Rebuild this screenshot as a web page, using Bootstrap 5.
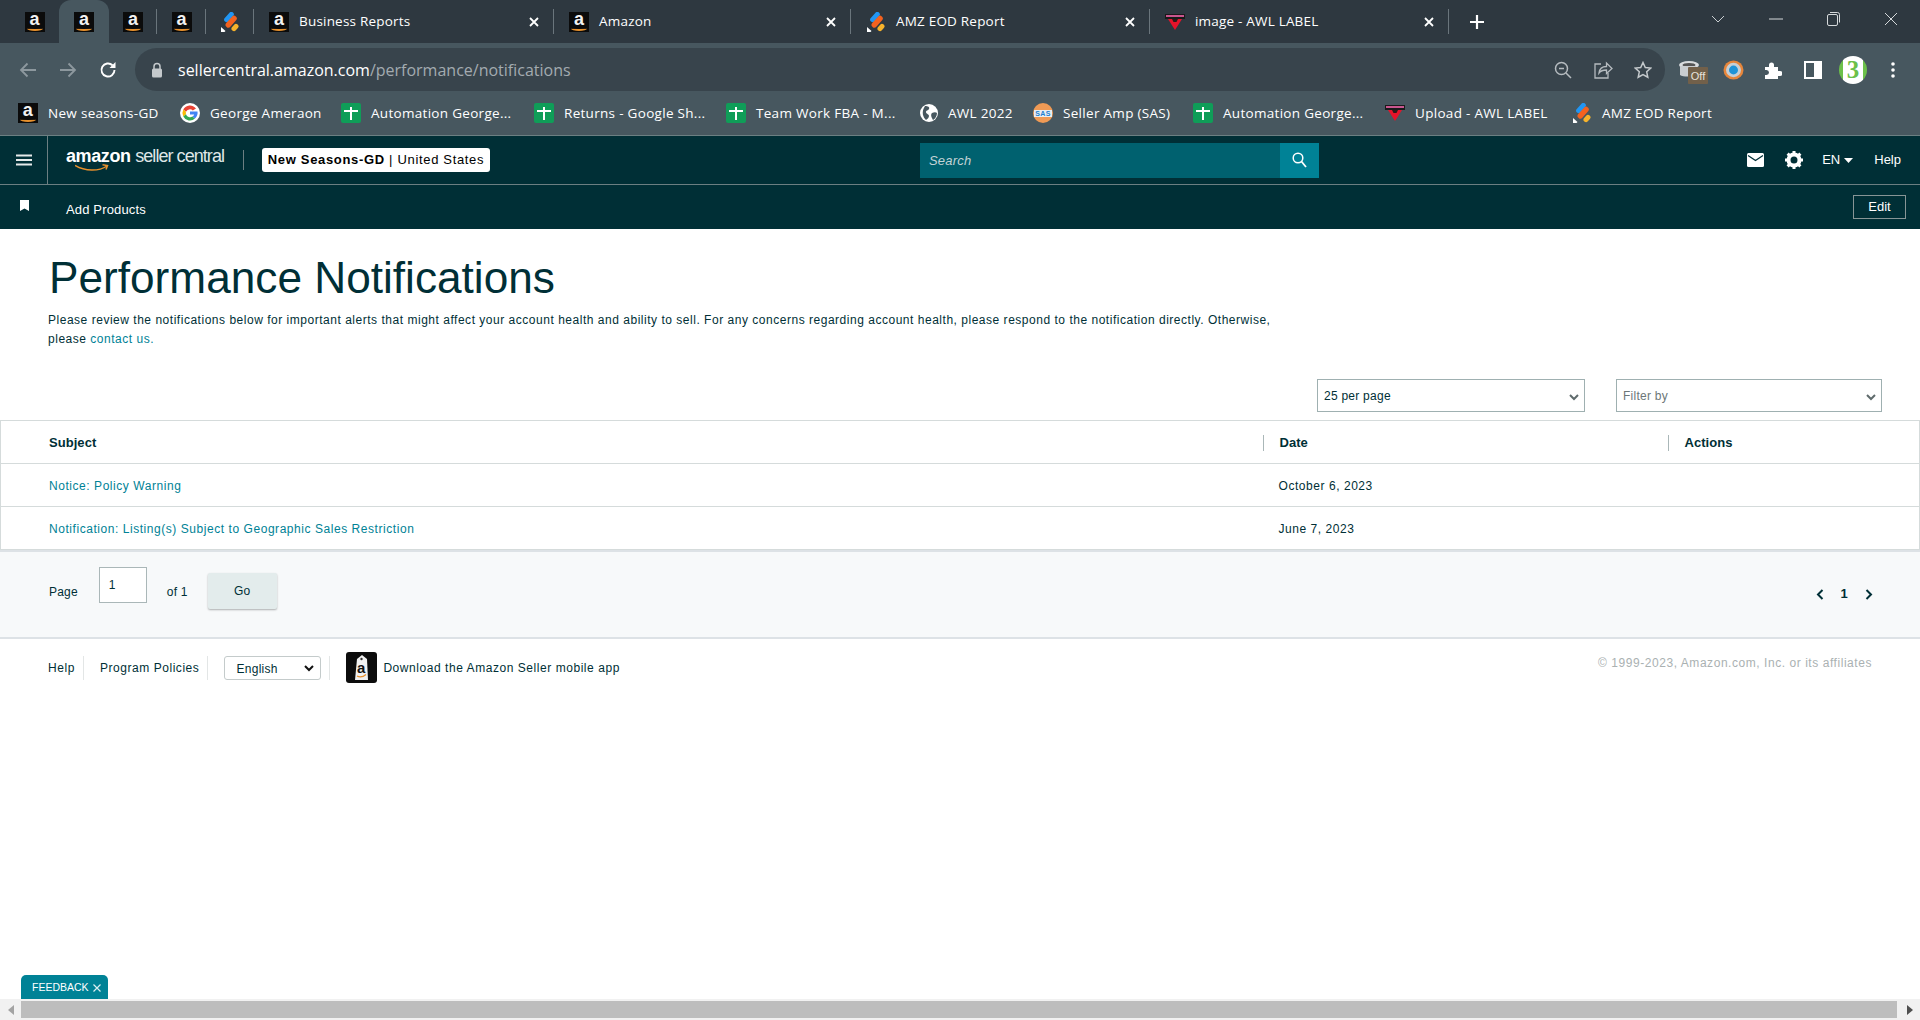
<!DOCTYPE html>
<html lang="en">
<head>
<meta charset="UTF-8">
<title>Performance Notifications</title>
<link href="https://cdn.jsdelivr.net/npm/bootstrap@5.3.0/dist/css/bootstrap.min.css" rel="stylesheet">
<style>
    html, body { height: 100%; overflow: hidden; }
    body { font-family: "Liberation Sans", Arial, sans-serif; font-size: 12px; color: #002f36; background: #fff; }
    .shell { height: 1020px; }

    /* browser chrome */
    .chrome-text { font-family: "Open Sans", "Noto Sans", sans-serif; color: #fff; white-space: nowrap; }
    .fav-a { width: 20px; height: 20px; flex: none; background: #0b0b0b; color: #f2f2f2; font: 700 18px/15px "Liberation Sans", sans-serif; text-align: center; position: relative; }
    .fav-a::after { content: ""; position: absolute; left: 2px; right: 2px; bottom: 1px; height: 5px; border-bottom: 2px solid #e8912d; border-radius: 50%; }
    .tab-strip { height: 43px; background: #2e3840; padding-left: 10px; display: grid; grid-template-columns: 49px 50px 48px 49px 48px 300px 297px 299px 299px 56px 1fr; }
    .tab-cell { display: flex; align-items: center; position: relative; font-size: 13.5px; letter-spacing: .2px; }
    .tab-cell.pin { justify-content: center; }
    .tab-cell.wide { padding-left: 15px; }
    .tab-cell.sep::after { content: ""; position: absolute; right: 0; top: 9px; height: 25px; width: 1px; background: #6a757c; }
    .tab-active { background: #47575f; border-radius: 12px 12px 0 0; }
    .tab-label { margin-left: 10px; flex: 1; }
    .tab-x { margin-right: 14px; }
    .win-btns { display: flex; justify-content: flex-end; padding-top: 8px; align-items: flex-start; }
    .win-btns span { width: 57.5px; display: flex; justify-content: center; height: 22px; align-items: center; }
    .win-btns span:last-child { margin-right: 0; width: 58px; }

    .tool-row { height: 48px; background: #47575f; padding-top: 5px; }
    .tool-btn { width: 40px; height: 43px; display: flex; align-items: center; justify-content: center; flex: none; }
    .tool-gap { width: 8px; flex: none; }
    .omni { width: 1530px; height: 43px; background: #38444c; border-radius: 22px; margin-left: 7px; padding-left: 15px; padding-right: 2px; flex: none; }
    .omni-url { margin-left: 14px; font-size: 16px; color: #fff; }
    .omni-url span { color: #a3abb0; }
    .avatar-three { width: 28px; height: 28px; border-radius: 50%; background: linear-gradient(90deg, #6cc04a 0 4px, #fff 4px 24px, #6cc04a 24px); color: #6cc04a; font: 700 25px/28px "Liberation Serif", serif; text-align: center; }
    .bm-row { height: 44px; background: #47575f; padding-left: 18px; display: grid; grid-template-columns: 162px 161px 193px 192px 194px 113px 160px 192px 187px 1fr; align-items: center; }
    .bm-item { display: flex; align-items: center; gap: 10px; font-size: 13.5px; letter-spacing: .3px; }

    /* seller central bars */
    .sc-top { height: 50px; background: #002f36; border-top: 1px solid #6c7f82; border-bottom: 1px solid #6c7f82; }
    .sc-burger { width: 48px; height: 48px; border-right: 1px solid #6c7f82; display: flex; align-items: center; justify-content: center; }
    .sc-logo { margin-left: 18px; width: 158px; height: 34px; padding-top: 3px; flex: none; }
    .sc-logo-text { display: flex; justify-content: space-between; font-size: 18px; line-height: 21px; white-space: nowrap; color: #dfe6e7; letter-spacing: -.95px; }
    .sc-logo-text b { color: #fff; letter-spacing: -.4px; }
    .sc-smile { display: block; margin: -3px 0 0 9px; }
    .sc-vr { width: 1px; height: 20px; background: #6c7f82; margin: 0 18px 0 19px; }
    .sc-account { width: 228px; height: 24px; background: #fff; border-radius: 3px; color: #000; font-size: 13px; display: flex; align-items: center; justify-content: center; white-space: nowrap; letter-spacing: .67px; }
    .sc-search { margin-left: 430px; width: 399px; height: 35px; display: flex; }
    .sc-search-in { width: 360px; background: #00616f; color: #c3d3d6; font-style: italic; font-size: 13px; line-height: 35px; padding-left: 9px; letter-spacing: .2px; }
    .sc-search-btn { width: 39px; background: #008296; display: flex; align-items: center; justify-content: center; }
    .sc-right { margin-left: auto; padding-right: 19px; color: #fff; font-size: 13px; }
    .sc-right > * { flex: none; }
    .sc-gear { margin-left: 21px; }
    .sc-lang { margin-left: 19px; }
    .sc-help { margin-left: 21px; }
    .sc-sub { height: 44px; background: #002f36; color: #fff; }
    .sc-sub-flag { width: 48px; display: flex; justify-content: center; padding-bottom: 3px; }
    .sc-sub-link { margin-left: 18px; font-size: 13px; letter-spacing: .15px; padding-top: 6px; }
    .sc-edit { margin-left: auto; margin-right: 14px; width: 53px; height: 24px; border: 1px solid #879596; color: #fff; font-size: 13px; display: flex; align-items: center; justify-content: center; }

    /* page */
    .page-head { padding: 25px 0 0 49px; }
    .page-title { font-size: 44.2px; line-height: 48px; font-weight: 400; color: #002f36; margin: 0 0 9px; }
    .page-note { font-size: 12px; line-height: 18.5px; letter-spacing: .52px; margin: 0 0 0 -1px; white-space: nowrap; }
    .page-note a { color: #008296; text-decoration: none; }
    .filter-row { display: flex; justify-content: flex-end; gap: 31px; padding-right: 38px; margin-top: 31px; }
    .fake-select { height: 33px; background: #fff; border: 1px solid #9fb0b1; display: flex; align-items: center; justify-content: space-between; padding: 0 5px 0 6px; font-size: 12px; letter-spacing: .25px; }
    .fake-select svg { margin-top: 4px; }
    .fs-a { width: 268px; }
    .fs-b { width: 266px; color: #6c7778; }

    .notice-table { margin: 8px 0 0; table-layout: fixed; width: 1920px; border-collapse: collapse; }
    .notice-table.table > * > * > * { padding: 2px 0 0 48px; height: 43px; border: 0; vertical-align: middle; font-size: 12px; letter-spacing: .55px; color: #002f36; background: transparent; box-shadow: none; }
    .notice-table.table > * > * { border-top: 1px solid #d5dbdb; border-bottom: 1px solid #d5dbdb; }
    .notice-table.table > * > * > *:first-child { border-left: 1px solid #d5dbdb; }
    .notice-table.table > * > * > *:last-child { border-right: 1px solid #d5dbdb; }
    .notice-table.table > * > * > .col-pad { padding-left: 16px; }
    .notice-table.table > thead th { font-size: 13px; font-weight: 700; letter-spacing: .05px; }
    .notice-table.table > thead th.col-pad { padding-left: 0; }
    .col-subject { width: 1262px; }
    .col-date { width: 405px; }
    .head-sep { display: block; border-left: 1px solid #aab7b8; padding-left: 16px; line-height: 16px; }
    .notice-table.table > * > * > .notice-link { color: #008296; }

    .pager { height: 89px; background: #f7f9fa; border-top: 2px solid #dde2e6; border-bottom: 2px solid #dde2e6; padding-left: 49px; padding-right: 47px; font-size: 12px; letter-spacing: .2px; }
    .pager-label { margin-top: 31px; }
    .pager-input { width: 48px; height: 36px; background: #fff; border: 1px solid #aab7b8; margin: 15px 0 0 21px; padding: 8px 0 0 9px; }
    .pager-of { margin: 31px 0 0 20px; }
    .pager-go { width: 69px; height: 36px; background: #e3ecec; border-radius: 2px; margin: 21px 0 0 20px; display: flex; align-items: center; justify-content: center; box-shadow: 0 1px 2px rgba(0,0,0,.3); font-size: 12px; }
    .pager-nums { margin-left: auto; margin-top: 35px; gap: 17px; font-size: 13px; font-weight: 700; height: 14px; }

    .foot-row { padding: 13px 48px 0 48px; font-size: 12px; letter-spacing: .55px; }
    .foot-sep { width: 1px; height: 24px; background: #e3e6e6; flex: none; }
    .foot-select { width: 97px; height: 24px; border: 1px solid #c4cbcb; border-radius: 3px; display: flex; align-items: center; justify-content: space-between; padding: 2px 6px 0 11px; font-size: 12px; flex: none; letter-spacing: .3px; }
    .foot-app { margin-left: 6px; }
    .foot-copy { margin-left: auto; color: #aab1b2; margin-top: -10px; }

    .feedback-tab { width: 87px; height: 24px; margin-left: 21px; background: #008296; border-radius: 5px 5px 0 0; color: #fff; font-size: 10.5px; display: flex; align-items: center; padding: 1px 0 0 11px; gap: 4px; }
    .fake-scroll { height: 21px; background: #f1f1f1; display: flex; align-items: center; justify-content: space-between; }
    .fake-thumb { flex: 1; height: 17px; background: #bdbdbd; margin: 0 2px 0 0; }
    .scroll-end { width: 21px; display: flex; justify-content: center; flex: none; }
</style>
</head>
<body>

<svg width="0" height="0" class="d-block">
    <symbol id="fav-amz" viewBox="0 0 20 20">
        <rect x="6.500" y="-1" width="5" height="12" rx="2.500" transform="rotate(42 9 5)" fill="#2196f3"/>
        <rect x="8.500" y="2.500" width="5.500" height="14" rx="2.700" transform="rotate(42 11 9.500)" fill="#f4621f"/>
        <rect x="12.500" y="11.500" width="5" height="8" rx="2.500" transform="rotate(42 15 15.500)" fill="#f7b32b"/>
        <path d="M1 15l4.500 4-1 1H1z" fill="#fff"/>
    </symbol>
    <symbol id="fav-sheet" viewBox="0 0 20 20">
        <rect width="20" height="20" rx="2" fill="#0f9d58"/>
        <path d="M10 4v13M3 8h14" stroke="#fff" stroke-width="2"/>
    </symbol>
    <symbol id="fav-awl" viewBox="0 0 20 16">
        <rect x="0" y="0" width="20" height="5" fill="#1a1a1a"/>
        <rect x="1" y="1" width="18" height="2" fill="#c9568f"/>
        <path d="M3 5h14l-7 11z" fill="#e5132a"/>
        <path d="M7 5h6l-1.500 3h-3z" fill="#2a1a1a"/>
    </symbol>
    <symbol id="ic-x" viewBox="0 0 12 12">
        <path d="M2 2l8 8M10 2l-8 8" stroke="#fff" stroke-width="1.800" fill="none"/>
    </symbol>
</svg>

<div class="shell d-flex flex-column">

    <!-- tabs -->
    <div class="tab-strip chrome-text">
        <div class="tab-cell pin"><span class="fav-a">a</span></div>
        <div class="tab-cell pin tab-active"><span class="fav-a">a</span></div>
        <div class="tab-cell pin sep"><span class="fav-a">a</span></div>
        <div class="tab-cell pin sep"><span class="fav-a">a</span></div>
        <div class="tab-cell pin sep"><svg width="20" height="20"><use href="#fav-amz"/></svg></div>
        <div class="tab-cell wide sep"><span class="fav-a">a</span><span class="tab-label">Business Reports</span><svg class="tab-x" width="12" height="12"><use href="#ic-x"/></svg></div>
        <div class="tab-cell wide sep"><span class="fav-a">a</span><span class="tab-label">Amazon</span><svg class="tab-x" width="12" height="12"><use href="#ic-x"/></svg></div>
        <div class="tab-cell wide sep"><svg width="20" height="20"><use href="#fav-amz"/></svg><span class="tab-label">AMZ EOD Report</span><svg class="tab-x" width="12" height="12"><use href="#ic-x"/></svg></div>
        <div class="tab-cell wide sep"><svg width="20" height="16"><use href="#fav-awl"/></svg><span class="tab-label">image - AWL LABEL</span><svg class="tab-x" width="12" height="12"><use href="#ic-x"/></svg></div>
        <div class="tab-cell justify-content-center"><svg width="16" height="16" viewBox="0 0 16 16"><path d="M8 1v14M1 8h14" stroke="#fff" stroke-width="2.200"/></svg></div>
        <div class="win-btns">
            <span><svg width="14" height="8" viewBox="0 0 14 8"><path d="M1 1l6 6 6-6" fill="none" stroke="#c9ced1" stroke-width="1"/></svg></span>
            <span><svg width="14" height="2" viewBox="0 0 14 2"><path d="M0 1h14" stroke="#d5d9db" stroke-width="1"/></svg></span>
            <span><svg width="13" height="14" viewBox="0 0 13 14"><rect x=".5" y="2.500" width="10" height="11" rx="1.500" fill="none" stroke="#d5d9db"/><path d="M3 .5h7.500a2 2 0 012 2v8" fill="none" stroke="#d5d9db"/></svg></span>
            <span><svg width="14" height="14" viewBox="0 0 14 14"><path d="M1 1l12 12M13 1L1 13" stroke="#d5d9db" stroke-width="1"/></svg></span>
        </div>
    </div>

    <!-- toolbar -->
    <div class="tool-row d-flex">
        <div class="tool-gap"></div>
        <div class="tool-btn"><svg width="18" height="16" viewBox="0 0 18 16"><path d="M17 8H2M8.500 1.500L2 8l6.500 6.500" fill="none" stroke="#8d989e" stroke-width="1.800"/></svg></div>
        <div class="tool-btn"><svg width="18" height="16" viewBox="0 0 18 16"><path d="M1 8h15M9.500 1.500L16 8l-6.500 6.500" fill="none" stroke="#8d989e" stroke-width="1.800"/></svg></div>
        <div class="tool-btn"><svg width="18" height="18" viewBox="0 0 18 18"><path d="M15.500 9a6.500 6.500 0 11-2-4.700" fill="none" stroke="#fff" stroke-width="1.900"/><path d="M16.500 1v6h-6z" fill="#fff"/></svg></div>
        <div class="omni d-flex align-items-center chrome-text">
            <svg width="14" height="16" viewBox="0 0 14 16"><path d="M4 7V4.500a3 3 0 016 0V7" fill="none" stroke="#c4c9cc" stroke-width="1.500"/><rect x="2" y="6.500" width="10" height="9" rx="1.500" fill="#c4c9cc"/></svg>
            <div class="omni-url">sellercentral.amazon.com<span>/performance/notifications</span></div>
            <div class="d-flex ms-auto">
                <div class="tool-btn"><svg width="18" height="18" viewBox="0 0 18 18"><circle cx="7.500" cy="7.500" r="6" fill="none" stroke="#b5bbbf" stroke-width="1.500"/><path d="M12 12l5 5M5 7.500h5" stroke="#b5bbbf" stroke-width="1.500"/></svg></div>
                <div class="tool-btn"><svg width="19" height="18" viewBox="0 0 19 18"><path d="M7 3H1v14h13v-5" fill="none" stroke="#b5bbbf" stroke-width="1.300"/><path d="M5 12c.5-4 3.500-6.500 7.500-6.500V2L18 7.500l-5.500 5V9C9 9 6.500 10 5 12z" fill="none" stroke="#b5bbbf" stroke-width="1.300"/></svg></div>
                <div class="tool-btn"><svg width="18" height="18" viewBox="0 0 18 18"><path d="M9 1.500l2.300 5 5.400.6-4 3.700 1.100 5.400L9 13.500l-4.800 2.700 1.100-5.400-4-3.700 5.400-.6z" fill="none" stroke="#c4c9cc" stroke-width="1.500"/></svg></div>
            </div>
        </div>
        <div class="tool-gap"></div>
        <div class="tool-btn"><svg width="30" height="28" viewBox="0 0 30 28"><ellipse cx="11" cy="9" rx="10" ry="4" fill="#d9dcde"/><ellipse cx="11" cy="9" rx="6.500" ry="2" fill="#555"/><path d="M2 10v9c3 2 12 2 16 0v-9" fill="#c9cdd0"/><rect x="10" y="11" width="20" height="17" rx="1" fill="#72604a"/><text x="20" y="24" text-anchor="middle" font-family="Liberation Sans" font-size="11" fill="#e6e2dc">Off</text></svg></div>
        <div class="tool-btn"><svg width="21" height="20" viewBox="0 0 21 25" preserveAspectRatio="none"><ellipse cx="10.500" cy="12.500" rx="10" ry="12" fill="#e7863b"/><ellipse cx="10.500" cy="12.500" rx="7.500" ry="9" fill="#c7cfd4"/><ellipse cx="10.500" cy="12.500" rx="4.500" ry="5.500" fill="#1f93d6"/></svg></div>
        <div class="tool-btn"><svg width="18" height="18" viewBox="0 0 18 18"><path d="M1 6h4V4a2.500 2.500 0 015 0v2h4v4h2a2.500 2.500 0 010 5h-2v3H1v-4h1.500a2.500 2.500 0 000-5H1z" fill="#fff"/></svg></div>
        <div class="tool-btn"><svg width="18" height="18" viewBox="0 0 18 18"><rect x="1" y="1" width="16" height="16" fill="none" stroke="#fff" stroke-width="2"/><rect x="10" y="1" width="7" height="16" fill="#fff"/></svg></div>
        <div class="tool-btn"><div class="avatar-three">3</div></div>
        <div class="tool-btn"><svg width="4" height="16" viewBox="0 0 4 16"><circle cx="2" cy="2" r="1.800" fill="#fff"/><circle cx="2" cy="8" r="1.800" fill="#fff"/><circle cx="2" cy="14" r="1.800" fill="#fff"/></svg></div>
    </div>

    <!-- bookmarks -->
    <div class="bm-row chrome-text">
        <div class="bm-item"><span class="fav-a">a</span>New seasons-GD</div>
        <div class="bm-item"><svg width="20" height="20" viewBox="0 0 20 20"><circle cx="10" cy="10" r="10" fill="#fff"/><path d="M16 5.500A7.500 7.500 0 003.300 6.600L6 8.800a4.300 4.300 0 016.800-1.300z" fill="#ea4335"/><path d="M3.300 6.600a7.500 7.500 0 000 6.800L6 11.200a4.300 4.300 0 010-2.400z" fill="#fbbc05"/><path d="M3.300 13.400A7.500 7.500 0 0015 15.600l-2.500-2A4.300 4.300 0 016 11.200z" fill="#34a853"/><path d="M17.500 8.500H10v3h4.200a4 4 0 01-1.700 2.100l2.500 2c2-1.800 3-4.500 2.500-7.100z" fill="#4285f4"/></svg>George Ameraon</div>
        <div class="bm-item"><svg width="20" height="20"><use href="#fav-sheet"/></svg>Automation George...</div>
        <div class="bm-item"><svg width="20" height="20"><use href="#fav-sheet"/></svg>Returns - Google Sh...</div>
        <div class="bm-item"><svg width="20" height="20"><use href="#fav-sheet"/></svg>Team Work FBA - M...</div>
        <div class="bm-item"><svg width="18" height="18" viewBox="0 0 18 18"><circle cx="9" cy="9" r="9" fill="#fff"/><path d="M5 2c3 0 5 1 4 3S6 6 6 8s3 2 3 4-2 3-3 4C3 13 1 8 5 2zM12 9c2-1 4-1 5 0 0 3-2 6-4 7-1-2-3-5-1-7z" fill="#47575f"/></svg>AWL 2022</div>
        <div class="bm-item"><svg width="20" height="20" viewBox="0 0 20 20"><circle cx="10" cy="10" r="10" fill="#ef9a55"/><rect x="1" y="7" width="18" height="7" fill="#e8eef2"/><text x="10" y="13" text-anchor="middle" font-family="Liberation Sans" font-weight="700" font-size="7" fill="#1c7fd0">SAS</text></svg>Seller Amp (SAS)</div>
        <div class="bm-item"><svg width="20" height="20"><use href="#fav-sheet"/></svg>Automation George...</div>
        <div class="bm-item"><svg width="20" height="16"><use href="#fav-awl"/></svg>Upload - AWL LABEL</div>
        <div class="bm-item"><svg width="20" height="20"><use href="#fav-amz"/></svg>AMZ EOD Report</div>
    </div>

    <!-- seller central top -->
    <div class="sc-top d-flex align-items-center">
        <div class="sc-burger"><svg width="16" height="12" viewBox="0 0 16 12"><path d="M0 1.500h16M0 6h16M0 10.500h16" stroke="#e6eaea" stroke-width="1.800"/></svg></div>
        <div class="sc-logo">
            <div class="sc-logo-text"><b>amazon</b><span>seller central</span></div>
            <svg class="sc-smile" width="34" height="9" viewBox="0 0 34 9"><path d="M0 1.500c10 6 24 6 32 .5M27.500 .8l5 .8-1.500 4" fill="none" stroke="#e8912d" stroke-width="1.500"/></svg>
        </div>
        <div class="sc-vr"></div>
        <div class="sc-account"><strong>New Seasons-GD</strong>&nbsp;| United States</div>
        <div class="sc-search">
            <div class="sc-search-in">Search</div>
            <div class="sc-search-btn"><svg width="15" height="16" viewBox="0 0 15 16"><circle cx="6" cy="6" r="4.800" fill="none" stroke="#fff" stroke-width="1.500"/><path d="M9.500 9.500l4.500 5.500" stroke="#fff" stroke-width="1.800"/></svg></div>
        </div>
        <div class="sc-right d-flex align-items-center">
            <svg width="17" height="14" viewBox="0 0 17 14"><rect width="17" height="14" rx="1.500" fill="#fff"/><path d="M1 2.500l7.500 5 7.500-5" fill="none" stroke="#002f36" stroke-width="1.300"/></svg>
            <svg class="sc-gear" width="18" height="18" viewBox="0 0 18 18"><circle cx="9" cy="9" r="5.500" fill="none" stroke="#fff" stroke-width="4"/><path d="M9 0v4M9 14v4M0 9h4M14 9h4M2.600 2.600l2.800 2.800M12.600 12.600l2.800 2.800M15.400 2.600l-2.800 2.800M5.400 12.600l-2.800 2.800" stroke="#fff" stroke-width="3"/></svg>
            <span class="sc-lang">EN</span>
            <svg class="ms-1" width="9" height="5" viewBox="0 0 9 5"><path d="M0 0h9L4.500 5z" fill="#fff"/></svg>
            <span class="sc-help">Help</span>
        </div>
    </div>
    <div class="sc-sub d-flex align-items-center">
        <div class="sc-sub-flag"><svg width="9" height="11" viewBox="0 0 9 11"><path d="M0 0h9v11L4.500 8.500 0 11z" fill="#fff"/></svg></div>
        <div class="sc-sub-link">Add Products</div>
        <div class="sc-edit">Edit</div>
    </div>

    <!-- heading -->
    <div class="page-head">
        <h1 class="page-title">Performance Notifications</h1>
        <p class="page-note">Please review the notifications below for important alerts that might affect your account health and ability to sell. For any concerns regarding account health, please respond to the notification directly. Otherwise,<br>please <a href="#">contact us.</a></p>
    </div>

    <div class="filter-row">
        <div class="fake-select fs-a">25 per page <svg width="10" height="7" viewBox="0 0 10 7"><path d="M1 1l4 4 4-4" fill="none" stroke="#5f6b6c" stroke-width="2"/></svg></div>
        <div class="fake-select fs-b">Filter by <svg width="10" height="7" viewBox="0 0 10 7"><path d="M1 1l4 4 4-4" fill="none" stroke="#5f6b6c" stroke-width="2"/></svg></div>
    </div>

    <table class="table notice-table">
        <colgroup><col class="col-subject"><col class="col-date"><col></colgroup>
        <thead>
            <tr><th>Subject</th><th class="col-pad"><span class="head-sep">Date</span></th><th class="col-pad"><span class="head-sep">Actions</span></th></tr>
        </thead>
        <tbody>
            <tr><td class="notice-link">Notice: Policy Warning</td><td class="col-pad">October 6, 2023</td><td></td></tr>
            <tr><td class="notice-link">Notification: Listing(s) Subject to Geographic Sales Restriction</td><td class="col-pad">June 7, 2023</td><td></td></tr>
        </tbody>
    </table>

    <!-- pagination -->
    <div class="pager d-flex">
        <div class="pager-label">Page</div>
        <div class="pager-input">1</div>
        <div class="pager-of">of 1</div>
        <div class="pager-go">Go</div>
        <div class="pager-nums d-flex align-items-center">
            <svg width="8" height="11" viewBox="0 0 8 11"><path d="M6.500 1L2 5.500 6.500 10" fill="none" stroke="#002f36" stroke-width="2"/></svg>
            <span>1</span>
            <svg width="8" height="11" viewBox="0 0 8 11"><path d="M1.500 1L6 5.500 1.500 10" fill="none" stroke="#002f36" stroke-width="2"/></svg>
        </div>
    </div>

    <!-- footer -->
    <div class="foot-row d-flex align-items-center">
        <span>Help</span>
        <span class="foot-sep ms-2"></span>
        <span class="ms-3">Program Policies</span>
        <span class="foot-sep ms-2"></span>
        <div class="foot-select ms-3">English <svg width="10" height="7" viewBox="0 0 10 7"><path d="M1 1l4 4 4-4" fill="none" stroke="#111" stroke-width="2"/></svg></div>
        <span class="foot-sep ms-2"></span>
        <svg class="ms-3" width="31" height="31" viewBox="0 0 31 31"><rect width="31" height="31" rx="3" fill="#0c0c0c"/><path d="M11 7l5-4 5 4 1 21H9z" fill="#f2f2f2"/><circle cx="15.500" cy="7" r="1.200" fill="#333"/><text x="15.500" y="21" text-anchor="middle" font-family="Liberation Sans" font-weight="700" font-size="15" fill="#111">a</text><path d="M11 24c3 1.500 6 1 9-1.500" fill="none" stroke="#e8912d" stroke-width="1.300"/></svg>
        <span class="foot-app">Download the Amazon Seller mobile app</span>
        <span class="foot-copy">© 1999-2023, Amazon.com, Inc. or its affiliates</span>
    </div>

    <!-- feedback and scrollbar -->
    <div class="feedback-tab mt-auto">FEEDBACK <svg width="8" height="8" viewBox="0 0 8 8"><path d="M.5.5l7 7M7.500.5l-7 7" stroke="#dbeef1" stroke-width="1.200"/></svg></div>
    <div class="fake-scroll">
        <div class="scroll-end"><svg width="6" height="10" viewBox="0 0 6 10"><path d="M6 0v10L0 5z" fill="#a3a3a3"/></svg></div>
        <div class="fake-thumb"></div>
        <div class="scroll-end"><svg width="6" height="10" viewBox="0 0 6 10"><path d="M0 0v10l6-5z" fill="#505050"/></svg></div>
    </div>
</div>

<script src="https://cdn.jsdelivr.net/npm/bootstrap@5.3.0/dist/js/bootstrap.bundle.min.js"></script>
</body>
</html>
